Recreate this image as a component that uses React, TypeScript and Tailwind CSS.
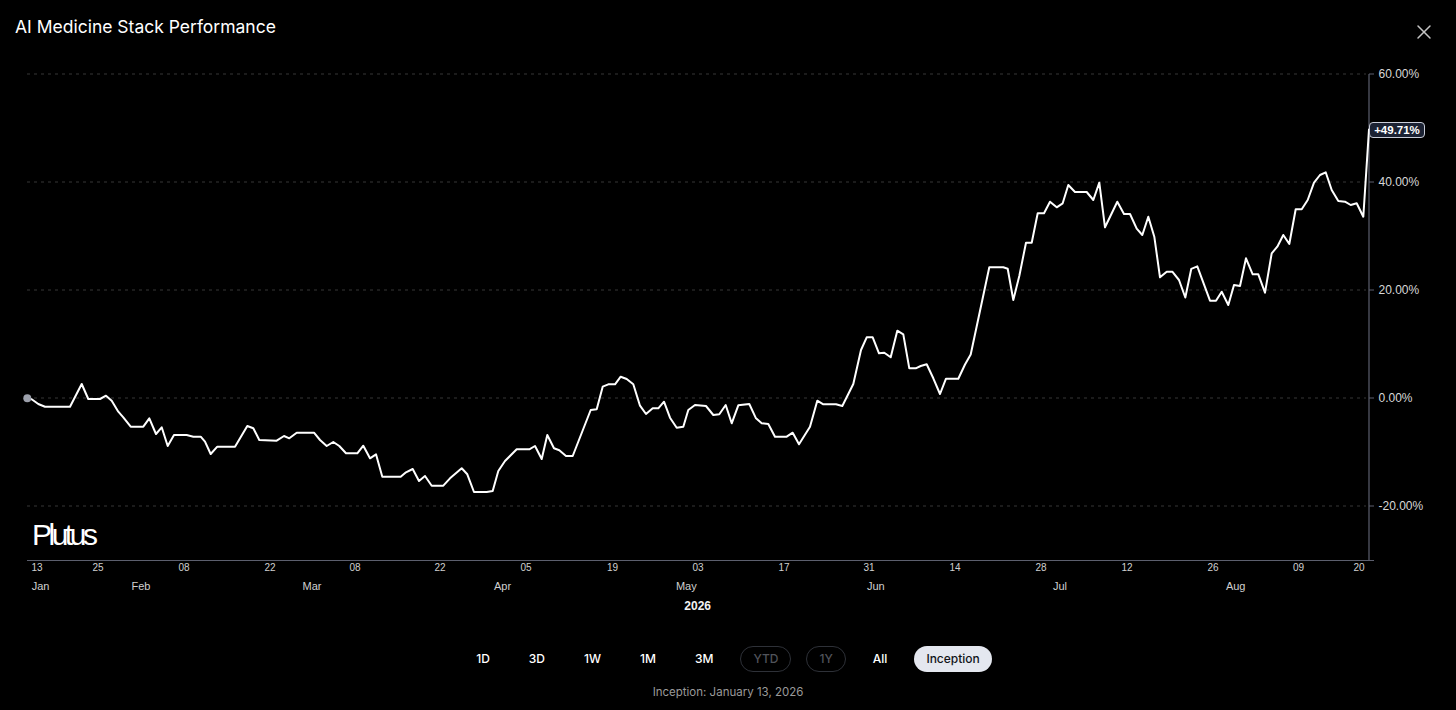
import { X } from "lucide-react";

// points traced from the chart, in page pixels
const line: [number, number][] = [
    [27.3, 398.3], [31.7, 399.3], [38.3, 404], [45, 406.7], [70, 406.7], [81.7, 384], [88.3, 399], [100, 399],
    [106, 395.7], [111.7, 400.7], [118.3, 411.7], [123.3, 417.3], [130.7, 426.7], [143.3, 426.7], [149.3, 418.3],
    [156, 434], [161.7, 427.3], [167.7, 446], [174, 435], [186.7, 435], [193.3, 436.7], [200.7, 436.7], [205, 441.7],
    [210.7, 454], [217.3, 446.7], [235, 446.7], [247.3, 426], [253.3, 428.3], [259.3, 440], [276.7, 440.7],
    [284, 436], [289.3, 438.3], [296.7, 432.7], [314, 432.7], [320, 440], [326.7, 446], [333.3, 442], [339.3, 446],
    [346, 453.3], [357.3, 453.3], [363.3, 445.7], [370, 458.3], [376, 454.3], [382.3, 476.7], [400.7, 476.7],
    [406, 472.3], [412.7, 469], [419, 481], [425, 476], [431.7, 485.7], [443.3, 485.7], [450, 478.3], [461.7, 468.3],
    [467.3, 474.3], [474, 492], [486.7, 492], [492.7, 491], [498.3, 471], [505, 461], [516.7, 449.3], [529.3, 449.3],
    [535, 446], [541.7, 459], [547.3, 435], [554, 448.3], [559.3, 450.3], [566, 456], [572.7, 456], [590.7, 410],
    [596.7, 409.3], [602.7, 386.7], [608.3, 384.3], [615, 384.3], [620.7, 376.7], [626.7, 379], [633.3, 384.3],
    [640, 405.7], [646, 414], [652.7, 408.3], [658.3, 408.3], [664, 401.7], [670, 417.7], [676.7, 427.7],
    [683.3, 426.7], [688.3, 410], [695, 405], [706, 406], [713.3, 415], [719.3, 414.3], [725.7, 405], [731.7, 423.3],
    [738.3, 405.3], [749.3, 404], [756, 418.3], [761.7, 423.3], [768.3, 424], [775, 436.7], [786.7, 436.7],
    [792.7, 432.7], [799, 444.3], [810, 426.7], [817.3, 400.7], [823.3, 404.3], [836, 404.3], [842.3, 406],
    [853.3, 384], [861, 350], [866.7, 337.3], [872.7, 337.3], [879, 353.3], [884.3, 352.7], [890.7, 357.3],
    [897.3, 330.7], [903.3, 334.3], [909.3, 368.3], [915.7, 368.3], [920.7, 366], [926.7, 364.3], [933.3, 378.3],
    [940, 394], [946, 378.7], [958.3, 378.7], [965, 364.5], [970.7, 354.5], [989.3, 267.3], [1003.3, 267.3],
    [1007.7, 268.7], [1013.3, 300], [1019.3, 276], [1026, 242.7], [1031.7, 242.7], [1037.7, 213.3], [1044, 213.3],
    [1050, 201.7], [1056.7, 207.3], [1062.7, 203.3], [1068.3, 185], [1075, 192], [1086.7, 192], [1093.3, 200],
    [1099.3, 182.7], [1105, 227.3], [1117.3, 201.7], [1124, 214], [1130, 214], [1136.7, 228.7], [1142.3, 235],
    [1148.3, 216.7], [1154.3, 236.7], [1160, 277.3], [1166.7, 271.7], [1172.3, 271.7], [1179, 280], [1185.3, 297.5],
    [1191.3, 268.8], [1197.3, 266.3], [1210, 300.7], [1216, 300.7], [1221.7, 291.7], [1228.3, 305], [1234, 285],
    [1240, 286], [1246, 258.3], [1252.7, 274.3], [1258.3, 274.3], [1265, 292.7], [1271.7, 253.3], [1277.3, 246.7],
    [1283.3, 235], [1289.3, 244], [1295.7, 209.3], [1301.7, 209.3], [1307.7, 200], [1314, 182.7], [1320, 175],
    [1325.7, 172.3], [1331.7, 190], [1338.3, 201], [1345, 201.7], [1350.7, 205], [1356.7, 203.3], [1363.3, 216.7],
    [1369, 129.6],
];

const grid = [
    { y: 74, label: "60.00%" },
    { y: 182, label: "40.00%" },
    { y: 290, label: "20.00%" },
    { y: 398, label: "0.00%" },
    { y: 506, label: "-20.00%" },
];

const days = [
    { x: 37, t: "13" }, { x: 98, t: "25" }, { x: 184, t: "08" }, { x: 270, t: "22" }, { x: 355, t: "08" },
    { x: 440, t: "22" }, { x: 526, t: "05" }, { x: 612.5, t: "19" }, { x: 698, t: "03" }, { x: 784, t: "17" },
    { x: 869, t: "31" }, { x: 955, t: "14" }, { x: 1041, t: "28" }, { x: 1127, t: "12" }, { x: 1213, t: "26" },
    { x: 1298.5, t: "09" }, { x: 1359, t: "20" },
];

const months = [
    { x: 40.5, t: "Jan" }, { x: 141, t: "Feb" }, { x: 312, t: "Mar" }, { x: 502.5, t: "Apr" },
    { x: 686.3, t: "May" }, { x: 875.8, t: "Jun" }, { x: 1060, t: "Jul" }, { x: 1235.7, t: "Aug" },
];

const ranges = [
    { t: "1D" }, { t: "3D" }, { t: "1W" }, { t: "1M" }, { t: "3M" },
    { t: "YTD", off: true }, { t: "1Y", off: true }, { t: "All" }, { t: "Inception", on: true },
];

const axisFont = "'Liberation Sans', Arial, sans-serif";

function Chart() {
    const d = line.map(([x, y], i) => `${i ? "L" : "M"}${x} ${y}`).join(" ");
    return (
        <svg width={1456} height={570} viewBox="0 50 1456 570" className="block" style={{ fontFamily: axisFont }}>
            {grid.map((g) => (
                <g key={g.label}>
                    <line x1={27} x2={1366} y1={g.y} y2={g.y} stroke="#363636" strokeWidth={1} strokeDasharray="3 4" />
                    <line x1={1369} x2={1374} y1={g.y} y2={g.y} stroke="#5c5f6e" strokeWidth={1} />
                    <text x={1378.5} y={g.y + 4.3} fill="#d8d8d8" fontSize={12}>{g.label}</text>
                </g>
            ))}
            <line x1={1369} x2={1369} y1={74} y2={560.5} stroke="#5c5f6e" strokeWidth={1.2} />
            <line x1={27} x2={1374} y1={560.5} y2={560.5} stroke="#5c5f6e" strokeWidth={1.2} />

            <text x={32} y={545} fill="#ffffff" fontSize={30} letterSpacing={-3.5}>Plutus</text>

            <path d={d} fill="none" stroke="#ffffff" strokeWidth={2} strokeLinejoin="round" strokeLinecap="round" />
            <circle cx={27.3} cy={398.3} r={4} fill="#9ca0ab" />

            <rect x={1369.5} y={122.5} width={55} height={15} rx={3.5} fill="#1b2233" stroke="#c9cdd8" strokeWidth={1} />
            <text x={1397} y={134.2} fill="#ffffff" fontSize={11.5} fontWeight={700} textAnchor="middle">+49.71%</text>

            {days.map((t, i) => (
                <text key={i} x={t.x} y={571} fill="#d0d0d0" fontSize={10} textAnchor="middle">{t.t}</text>
            ))}
            {months.map((m) => (
                <text key={m.t} x={m.x} y={589.5} fill="#d0d0d0" fontSize={11} textAnchor="middle">{m.t}</text>
            ))}
            <text x={697.7} y={610} fill="#f2f2f2" fontSize={12} fontWeight={700} textAnchor="middle">2026</text>
        </svg>
    );
}

export default function App() {
    return (
        <div className="h-[710px] w-[1456px] bg-black text-white overflow-hidden" style={{ fontFamily: "Inter, 'Noto Sans', sans-serif" }}>
            <div className="flex h-[50px] items-start justify-between">
                <h1 className="pl-[15px] pt-[15px] text-[17.5px] leading-[24px] font-normal text-white">AI Medicine Stack Performance</h1>
                <button className="pr-[20px] pt-[20px] text-[#c4c4c4]">
                    <X size={24} strokeWidth={1.5} />
                </button>
            </div>

            <Chart />

            <div className="mt-[26px] flex items-center justify-center gap-[15px]">
                {ranges.map((r) => (
                    <button
                        key={r.t}
                        className={`h-[26px] rounded-full px-3 text-[12px] font-medium leading-none ${
                            r.on
                                ? "bg-[#e4e7ef] text-[#111318]"
                                : r.off
                                    ? "border border-[#2e3138] text-[#50535a]"
                                    : "text-white"
                        }`}
                    >
                        {r.t}
                    </button>
                ))}
            </div>
            <p className="mt-[13px] text-center text-[11.5px] leading-[14px] text-[#9a9a9a]">Inception: January 13, 2026</p>
        </div>
    );
}
